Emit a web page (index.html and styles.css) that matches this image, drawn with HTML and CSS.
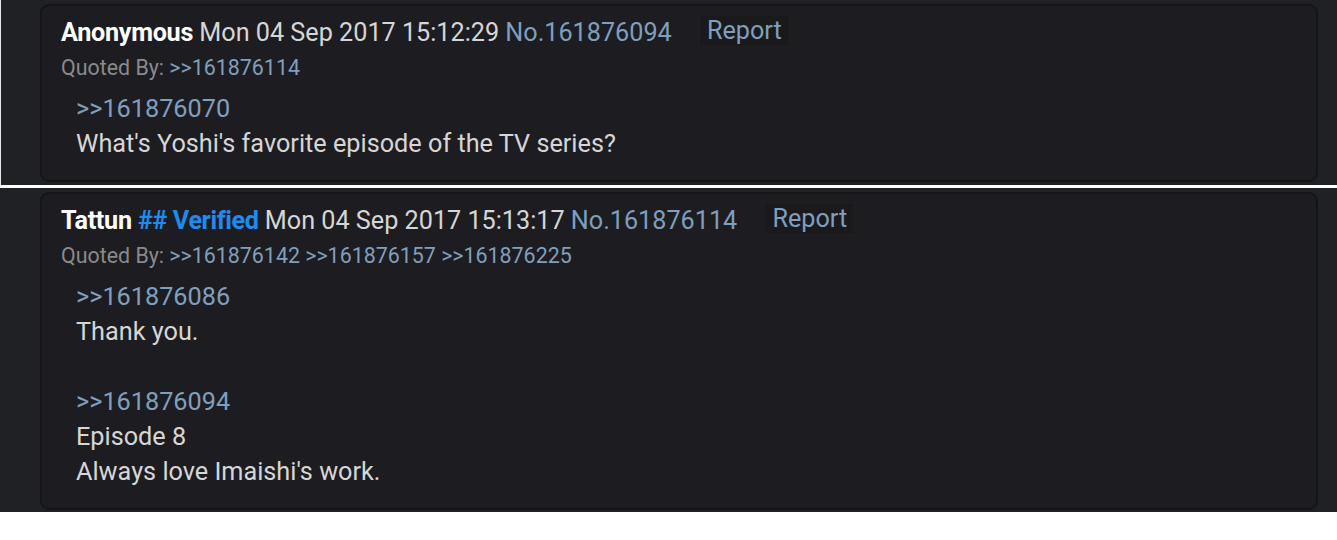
FILE: index.html
```html
<!DOCTYPE html>
<html>
<head>
    <title>Thread</title>
    <link rel="stylesheet" href="styles.css">
</head>
<body>

<div class="post-wrap highlighted">
    <div class="post">
        <div class="post-header">
            <span class="name">Anonymous</span>
            <span class="date">Mon 04 Sep 2017 15:12:29</span>
            <a class="post-no" href="#p161876094">No.161876094</a>
            <button class="report">Report</button>
        </div>
        <div class="quoted-by">
            Quoted By: <a href="#p161876114">&gt;&gt;161876114</a>
        </div>
        <div class="post-body">
            <a class="quote" href="#p161876070">&gt;&gt;161876070</a><br>
            What's Yoshi's favorite episode of the TV series?
        </div>
    </div>
</div>

<div class="post-wrap">
    <div class="post">
        <div class="post-header">
            <span class="name">Tattun</span>
            <span class="trip">## Verified</span>
            <span class="date">Mon 04 Sep 2017 15:13:17</span>
            <a class="post-no" href="#p161876114">No.161876114</a>
            <button class="report">Report</button>
        </div>
        <div class="quoted-by">
            Quoted By: <a href="#p161876142">&gt;&gt;161876142</a> <a href="#p161876157">&gt;&gt;161876157</a> <a href="#p161876225">&gt;&gt;161876225</a>
        </div>
        <div class="post-body">
            <a class="quote" href="#p161876086">&gt;&gt;161876086</a><br>
            Thank you.<br>
            <br>
            <a class="quote" href="#p161876094">&gt;&gt;161876094</a><br>
            Episode 8<br>
            Always love Imaishi's work.
        </div>
    </div>
</div>

</body>
</html>
```

FILE: styles.css
```css
body {
    margin: 0;
    background: #ffffff;
    font-family: Roboto, "Liberation Sans", sans-serif;
    font-size: 25px;
}
a {
    color: #7f9fbf;
    text-decoration: none;
}
.post-wrap {
    background: #202124;
    padding: 4px 19px 2px 40px;
    margin-bottom: 3px;
}
.post-wrap.highlighted {
    border-left: 1px solid #e6e6e6;
    padding-left: 39px;
    padding-top: 4px;
    padding-bottom: 3px;
}
.post {
    background: #1d1d21;
    border: 2px solid #151518;
    border-radius: 9px;
    padding: 9px 20px 19px 19px;
}
.post-header {
    line-height: 35px;
    color: #d6d6d6;
    font-size: 25.2px;
}
.name {
    color: #ffffff;
    font-weight: bold;
    letter-spacing: -0.3px;
}
.trip {
    color: #1f8bf0;
    font-weight: bold;
    letter-spacing: -0.4px;
}
.post-no {
    color: #7f9fbf;
}
.report {
    font-family: inherit;
    font-size: 25.2px;
    color: #7f9fbf;
    background: #1a1a1d;
    border: 1px solid #1f1f22;
    padding: 0 7px;
    height: 32px;
    line-height: 30px;
    margin-left: 21px;
    vertical-align: 2px;
}
.quoted-by {
    font-size: 21.4px;
    line-height: 35px;
    color: #8a8a8a;
}
.quoted-by a {
    color: #7f9fbf;
}
.post-body {
    margin: 6px 0 0 15px;
    line-height: 35px;
    color: #d6d6d6;
    font-size: 25.25px;
}
.quote {
    color: #7f9fbf;
}
```
